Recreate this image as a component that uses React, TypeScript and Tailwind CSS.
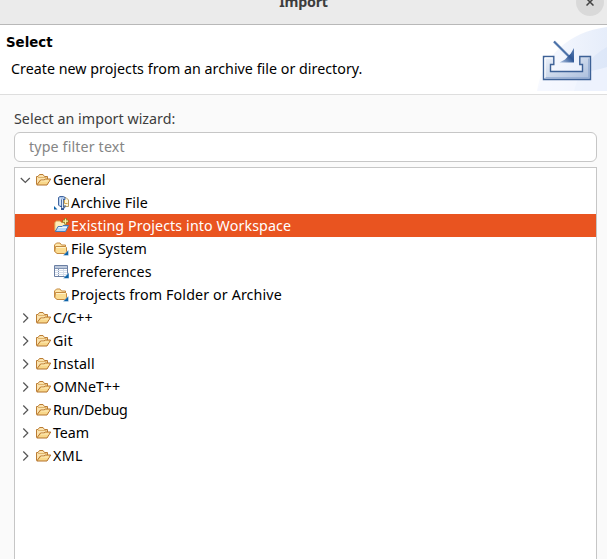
import type { ReactNode } from "react";

type IconKind = "open" | "archive" | "existing" | "folder" | "prefs";

function OpenFolder() {
  return (
    <svg width="16" height="16" viewBox="0 0 16 16" fill="none" className="shrink-0">
      <path d="M.5 12.5V4.5L2 4.5L3.5 2.5H7L8.5 4.5H11.5V7" fill="#fbe3ae" stroke="#bb7c33" />
      <path d="M2 5.5H10.5" stroke="#dfb46c" />
      <path d="M.8 13L4.5 8H8L9.5 7H14.7L11 13Z" fill="#f8d78a" stroke="#b5722a" strokeLinejoin="round" />
      <path d="M5 9H12.8" stroke="#fff2c8" strokeWidth=".8" />
    </svg>
  );
}

function ClosedFolder() {
  return (
    <svg width="16" height="16" viewBox="0 0 16 16" fill="none" className="shrink-0">
      <path d="M.5 10V4L2.5 2H6L7.5 4H11.5V11.5H2Z" fill="#ffe7aa" stroke="#c58a40" strokeLinejoin="round" />
      <path d="M1.5 5.5H11.5L12.5 6.5V11L11.5 12.5H3L.8 10.5Z" fill="#fbdc91" stroke="#c58a40" strokeLinejoin="round" />
      <path d="M2 6.5H11.5" stroke="#fff3ca" />
      <path d="M14.5 9V14.5H9Z" fill="#0c62a8" stroke="#fff" strokeWidth=".4" />
    </svg>
  );
}

function ArchiveIcon() {
  return (
    <svg width="16" height="16" viewBox="0 0 16 16" fill="none" className="shrink-0">
      <path d="M0 11L3.5 14.5H0Z" fill="#0c62a8" />
      <path d="M9 2.5H12L14.5 5V11.5H9Z" fill="#fff6d9" stroke="#b59a60" />
      <path d="M10.5 5V8.5H13.5" stroke="#d3a955" />
      <path d="M4.5 10V2.5L6 1.5H9.5L11 2.5V4.5H8.5V11.5H6Z" fill="#a9c4e8" stroke="#41659f" />
      <path d="M6.2 3V10" stroke="#e6f2ff" />
      <path d="M8.5 4.5V13" stroke="#294f91" strokeWidth="2.4" />
      <path d="M8.5 4V13" stroke="#dbe9fa" />
      <path d="M11 10V12L10 13.5H7M7 14.5H10" stroke="#355b98" />
    </svg>
  );
}

function ExistingIcon() {
  return (
    <svg width="16" height="16" viewBox="0 0 16 16" fill="none" className="shrink-0">
      <path d="M.8 12.5V4.5L2.5 3H6L7.5 4.5H11.5V7" fill="#ffedb9" stroke="#d6a14c" />
      <path d="M1.3 13.5L4 8.5H8L9 7.5H14.5L11.5 13.5Z" fill="#b8d8f8" stroke="#447bb6" />
      <path d="M4.5 9.5H13" stroke="#eaf6ff" />
      <path d="M11.5 0V6.4M8.3 3.2H14.7" stroke="#8c7b20" strokeWidth="2.6" />
      <path d="M11.5 .7V5.7M9 3.2H14" stroke="#fff3a3" strokeWidth="1.2" />
    </svg>
  );
}

function PreferencesIcon() {
  return (
    <svg width="16" height="16" viewBox="0 0 16 16" fill="none" className="shrink-0">
      <path d="M.5 1.5H13.5V12.5H.5Z" fill="#fff" stroke="#6b7fa3" />
      <path d="M1 2H13V4H1Z" fill="#bdc9dc" />
      <path d="M1 4.5H13M4.5 4V12" stroke="#8194b3" />
      <path d="M9.5 5V12M1 6.5H13M1 8.5H13M1 10.5H13" stroke="#d5ddea" />
      <path d="M15 8.5V14.5H9Z" fill="#0c62a8" stroke="#fff" strokeWidth=".5" />
    </svg>
  );
}

const icons: Record<IconKind, ReactNode> = {
  open: <OpenFolder />,
  archive: <ArchiveIcon />,
  existing: <ExistingIcon />,
  folder: <ClosedFolder />,
  prefs: <PreferencesIcon />,
};

interface RowData {
  label: string;
  icon: IconKind;
  tracking: string;
  child?: boolean;
  expanded?: boolean;
  selected?: boolean;
}

const rows: RowData[] = [
  { label: "General", icon: "open", expanded: true, tracking: "tracking-normal" },
  { label: "Archive File", icon: "archive", child: true, tracking: "tracking-[0.1px]" },
  { label: "Existing Projects into Workspace", icon: "existing", child: true, selected: true, tracking: "tracking-[0.11px]" },
  { label: "File System", icon: "folder", child: true, tracking: "tracking-[0.09px]" },
  { label: "Preferences", icon: "prefs", child: true, tracking: "tracking-[0.12px]" },
  { label: "Projects from Folder or Archive", icon: "folder", child: true, tracking: "tracking-[0.13px]" },
  { label: "C/C++", icon: "open", tracking: "tracking-normal" },
  { label: "Git", icon: "open", tracking: "tracking-[0.2px]" },
  { label: "Install", icon: "open", tracking: "tracking-[0.1px]" },
  { label: "OMNeT++", icon: "open", tracking: "tracking-normal" },
  { label: "Run/Debug", icon: "open", tracking: "tracking-[-0.22px]" },
  { label: "Team", icon: "open", tracking: "tracking-[-0.1px]" },
  { label: "XML", icon: "open", tracking: "tracking-[0.4px]" },
];

function TreeRow({ row }: { row: RowData }) {
  return (
    <li className={`flex h-[23px] items-center ${row.child ? "pl-[39px]" : "pl-[5px]"} ${row.selected ? "bg-[#e95420] text-white" : "text-black"}`}>
      {!row.child && (
        <svg width="11" height="12" viewBox="0 0 11 12" fill="none" stroke="#555" strokeWidth="1.2" className="mr-[5px] shrink-0">
          <path d={row.expanded ? "M.8 4L5.3 8.5L9.8 4" : "M3.3 1.5L7.8 6L3.3 10.5"} />
        </svg>
      )}
      {icons[row.icon]}
      <span className={`ml-px whitespace-nowrap leading-[22px] ${row.tracking}`}>{row.label}</span>
    </li>
  );
}

function ImportBanner() {
  return (
    <svg width="75" height="65" viewBox="0 0 75 65" fill="none">
      <defs>
        <linearGradient id="sky" x1="0" y1="0" x2="1" y2="0">
          <stop stopColor="#f8faff" />
          <stop offset="1" stopColor="#e6edfa" />
        </linearGradient>
        <linearGradient id="tray" x1="0" y1="0" x2="1" y2="1">
          <stop stopColor="#edf2fa" />
          <stop offset="1" stopColor="#a9bddb" />
        </linearGradient>
        <linearGradient id="head" x1="0" y1="1" x2="1" y2="0">
          <stop stopColor="#b4c8e4" />
          <stop offset=".55" stopColor="#2f5796" />
          <stop offset="1" stopColor="#5c7fb3" />
        </linearGradient>
      </defs>
      <path d="M5 65C10 31 36 6 75 1V65Z" fill="url(#sky)" />
      <path d="M42 65C47 47 57 31 75 21V65Z" fill="#d3e0f7" opacity=".45" />
      <path d="M15 46C39 47 61 46 75 41V65H5Z" fill="#f4f8ff" opacity=".65" />
      <path d="M11.5 30.5H21.8V38.5H18.5V45.5H50.5V38.5H47.8V30.5H58.5V53.5H11.5Z" fill="url(#tray)" stroke="#3d6196" strokeWidth="1.4" />
      <path d="M13 52V32H20.5" stroke="#fff" />
      <path d="M13.5 51.8H56.8V32.5" stroke="#8fa9d0" />
      <path d="M22 15.5L38 31.5" stroke="#c2d1e5" strokeWidth="3" />
      <path d="M22 15.5L38 31.5" stroke="#4a70a8" strokeWidth="1.8" />
      <path d="M42 22V36.6H27.5L33 33.5L38.8 27.5Z" fill="url(#head)" />
    </svg>
  );
}

export default function App() {
  return (
    <main className="flex h-[559px] w-[607px] flex-col overflow-hidden bg-[#fafafa] font-['Noto_Sans',sans-serif] text-[14.25px]">
      <header className="relative flex h-[25px] shrink-0 justify-center border-b border-[#b8b8b8] bg-[#ebebeb]">
        <h1 className="-mt-[8px] h-5 text-[14.25px] font-bold leading-5 tracking-[-0.25px] text-[#3d3d3d]">Import</h1>
        <button aria-label="Close" className="absolute -top-3 left-[576px] flex size-7 items-center justify-center rounded-full bg-[#d9d9d9]">
          <svg width="8" height="8" viewBox="0 0 8 8" stroke="#444" strokeWidth="1.5" className="-mt-px">
            <path d="M.5.5L7.5 7.5M7.5.5L.5 7.5" />
          </svg>
        </button>
      </header>
      <section className="flex h-[70px] shrink-0 justify-between border-b border-[#dedede] bg-white pt-px">
        <div className="pt-[5px] text-black">
          <h2 className="ml-1.5 font-['DejaVu_Sans',sans-serif] text-[13.33px] font-bold leading-[24px]">Select</h2>
          <p className="ml-[11px] mt-[3px] whitespace-nowrap leading-[22px] tracking-[0.025px]">Create new projects from an archive file or directory.</p>
        </div>
        <ImportBanner />
      </section>
      <section className="flex min-h-0 flex-1 flex-col pl-3.5 pr-2.5">
        <label className="mt-[13px] h-6 whitespace-nowrap leading-[22px] tracking-[0.03px] text-[#3d3d3d]">Select an import wizard:</label>
        <div className="flex h-[30px] shrink-0 items-center rounded-md border border-[#c6c6c6] bg-white pl-3.5 text-[#858585]">
          <span className="leading-[22px] tracking-[0.14px]">type filter text</span>
        </div>
        <ul className="mt-[5px] flex-1 border border-b-0 border-[#c6c6c6] bg-white">
          {rows.map((row) => <TreeRow key={row.label} row={row} />)}
        </ul>
      </section>
    </main>
  );
}
